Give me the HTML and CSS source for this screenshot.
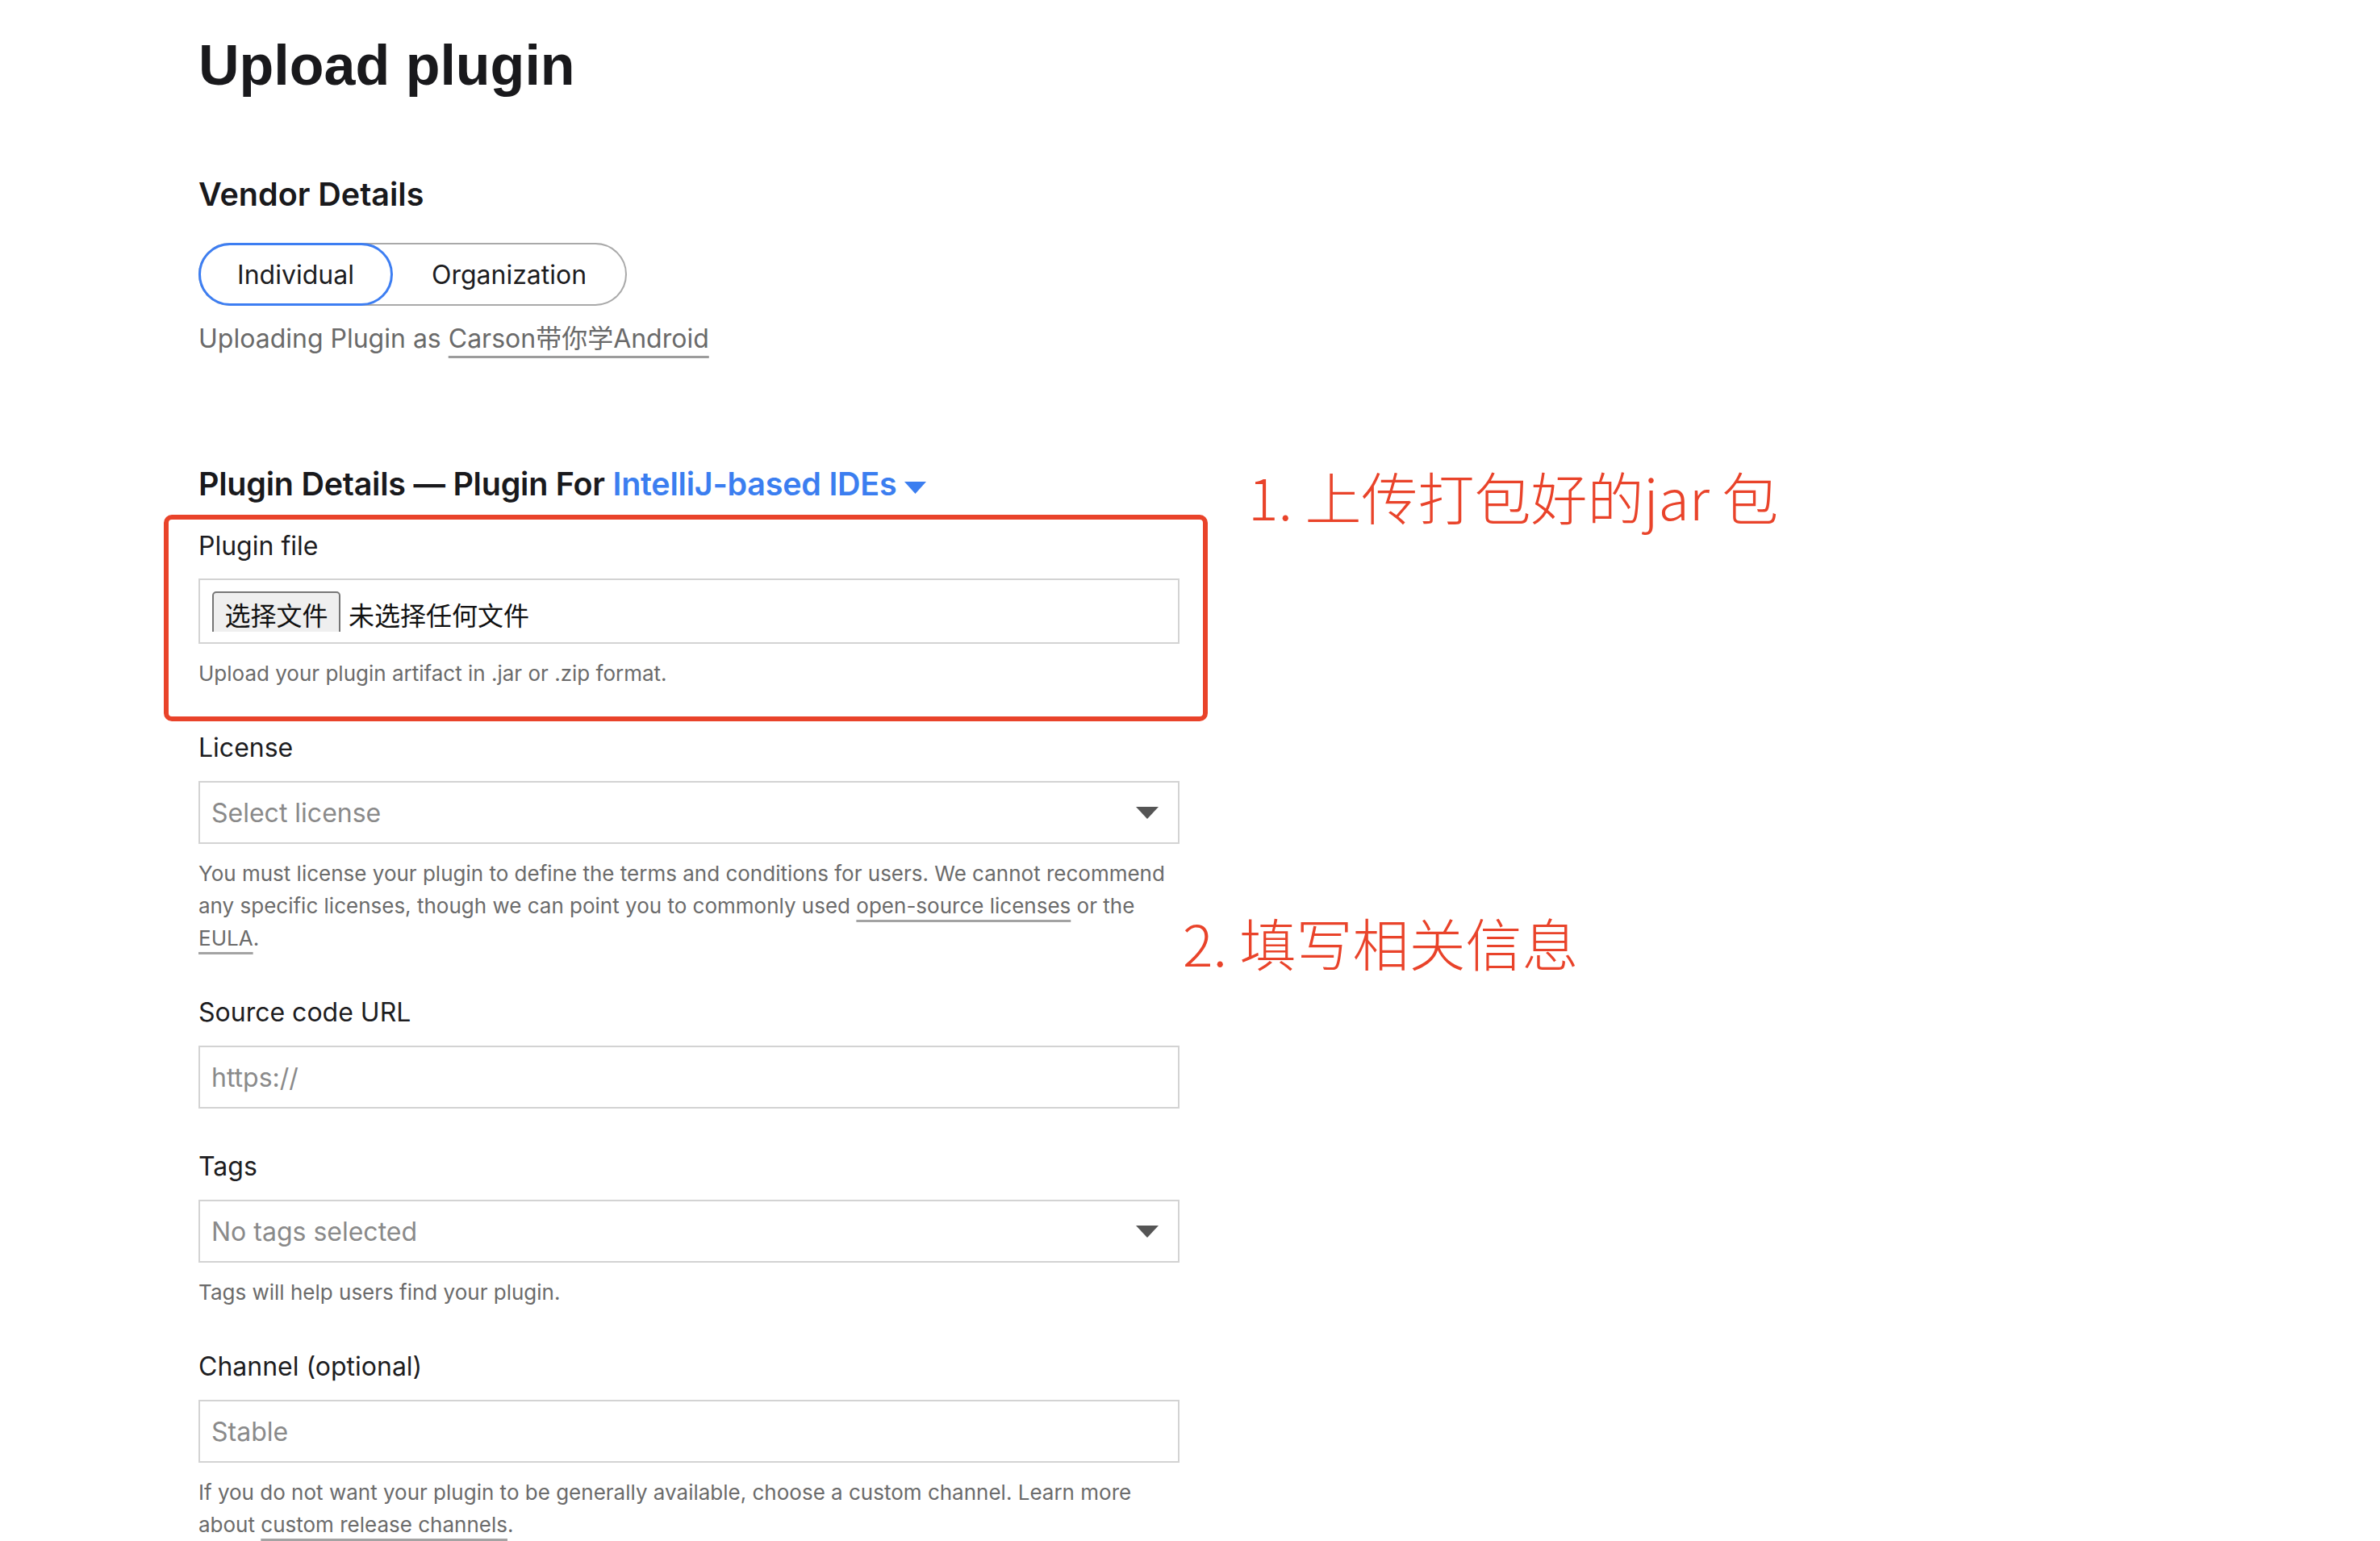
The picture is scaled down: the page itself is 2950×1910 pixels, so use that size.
FILE: index.html
```html
<!DOCTYPE html>
<html lang="en">
<head>
<meta charset="utf-8">
<title>Upload plugin</title>
<link rel="stylesheet" href="styles.css">
</head>
<body>
<main class="page">
  <h1 class="title">Upload plugin</h1>

  <section class="vendor">
    <h2 class="heading">Vendor Details</h2>
    <div class="toggle">
      <span class="opt opt-active">Individual</span>
      <span class="opt">Organization</span>
    </div>
    <p class="as">Uploading Plugin as <span class="as-name">Carson带你学Android</span></p>
  </section>

  <section class="details">
    <h2 class="heading heading-details">Plugin Details — Plugin For <span class="ide">IntelliJ-based IDEs<svg class="ide-caret" width="27" height="15" viewBox="0 0 27 15"><path d="M0 0H27L13.5 15Z" fill="currentColor"/></svg></span></h2>

    <div class="fields">
      <div class="field">
        <div class="label">Plugin file</div>
        <div class="file">
          <div class="file-inner">
            <span class="file-btn">选择文件</span>
            <span class="file-none">未选择任何文件</span>
          </div>
        </div>
        <p class="help">Upload your plugin artifact in .jar or .zip format.</p>
      </div>

      <div class="field">
        <div class="label">License</div>
        <div class="control select">
          <span class="ph">Select license</span>
          <svg class="caret" width="28" height="15" viewBox="0 0 28 15"><path d="M0 0H28L14 15Z" fill="#555"/></svg>
        </div>
        <p class="help">You must license your plugin to define the terms and conditions for users. We cannot recommend any specific licenses, though we can point you to commonly used <span class="link">open-source licenses</span> or the <span class="link">EULA</span>.</p>
      </div>

      <div class="field">
        <div class="label">Source code URL</div>
        <div class="control"><span class="ph">https://</span></div>
      </div>

      <div class="field">
        <div class="label">Tags</div>
        <div class="control select">
          <span class="ph">No tags selected</span>
          <svg class="caret" width="28" height="15" viewBox="0 0 28 15"><path d="M0 0H28L14 15Z" fill="#555"/></svg>
        </div>
        <p class="help">Tags will help users find your plugin.</p>
      </div>

      <div class="field">
        <div class="label">Channel (optional)</div>
        <div class="control"><span class="ph">Stable</span></div>
        <p class="help">If you do not want your plugin to be generally available, choose a custom channel. Learn more about <span class="link">custom release channels</span>.</p>
      </div>
    </div>
  </section>

  <div class="mark-box"></div>
  <div class="note note-1">1. 上传打包好的jar 包</div>
  <div class="note note-2">2. 填写相关信息</div>
</main>
</body>
</html>
```

FILE: styles.css
```css
html, body {
  margin: 0;
  padding: 0;
  background: #ffffff;
}

body {
  font-family: "Inter", "Noto Sans CJK SC", sans-serif;
  color: #1d1d1f;
}

.page {
  position: relative;
  padding: 41px 0 0 246px;
  width: 1216px;
}

.title {
  margin: 0;
  font-family: "Liberation Sans", "Noto Sans CJK SC", sans-serif;
  font-weight: 700;
  font-size: 70px;
  line-height: 80px;
  color: #19191c;
}

.heading {
  margin: 0;
  font-size: 39.5px;
  font-weight: 600;
  line-height: 48px;
  color: #19191c;
}

.heading-details {
  letter-spacing: -0.25px;
}

.vendor {
  margin-top: 96px;
  display: flex;
  flex-direction: column;
  align-items: flex-start;
}

.toggle {
  margin-top: 36px;
  display: inline-flex;
  box-sizing: border-box;
  height: 78px;
  width: 531px;
  border: 2px solid #a9a9a9;
  border-radius: 39px;
}

.opt {
  display: flex;
  align-items: center;
  justify-content: center;
  font-size: 32px;
  color: #1d1d1f;
  flex: 1;
}

.opt-active {
  flex: 0 0 241px;
  box-sizing: border-box;
  height: 78px;
  margin: -2px 0 -2px -2px;
  border: 3px solid #3d7ef2;
  border-radius: 39px;
}

.as {
  margin: 21px 0 0;
  font-size: 32px;
  line-height: 40px;
  color: #6a6a6a;
}

.as-name {
  text-decoration: underline;
  text-decoration-color: #9c9c9c;
  text-decoration-thickness: 3px;
  text-underline-offset: 10px;
}

.details {
  margin-top: 136px;
}

.ide {
  color: #3b7ef0;
}

.ide-caret {
  margin-left: 10px;
  vertical-align: 2px;
}

.fields {
  margin-top: 33px;
  display: flex;
  flex-direction: column;
  gap: 52px;
}

.field {
  display: flex;
  flex-direction: column;
}

.label {
  font-size: 32px;
  line-height: 40px;
  color: #1d1d1f;
  margin-bottom: 21px;
}

.control {
  box-sizing: border-box;
  height: 78px;
  border: 2px solid #d3d3d3;
  display: flex;
  align-items: center;
  padding: 0 24px 0 14px;
}

.select {
  justify-content: space-between;
}

.ph {
  font-size: 32px;
  color: #8a8a8a;
}

.file {
  box-sizing: border-box;
  height: 81px;
  margin-top: -1px;
  border: 2px solid #d3d3d3;
  padding: 14px 0 0 15px;
}

.file-inner {
  height: 50px;
  overflow: hidden;
  display: flex;
  align-items: flex-start;
  gap: 10px;
  font-family: "Noto Sans CJK SC", sans-serif;
  font-size: 32px;
  color: #111;
}

.file-btn {
  box-sizing: border-box;
  height: 60px;
  width: 159px;
  border: 2px solid #767676;
  border-radius: 5px;
  background: #efefef;
  text-align: center;
  line-height: 52px;
}

.file-none {
  line-height: 56px;
}

.help {
  margin: 17px 0 0;
  font-size: 26px;
  line-height: 40px;
  color: #6b6b6b;
}

.link {
  text-decoration: underline;
  text-decoration-color: #a3a3a3;
  text-decoration-thickness: 3px;
  text-underline-offset: 8px;
}

.mark-box {
  position: absolute;
  left: 203px;
  top: 638px;
  width: 1294px;
  height: 256px;
  box-sizing: border-box;
  border: 6px solid #e9432a;
  border-radius: 10px;
}

.note {
  position: absolute;
  font-family: "Noto Sans CJK SC", sans-serif;
  font-weight: 300;
  font-size: 70px;
  line-height: 80px;
  color: #e9432a;
  white-space: nowrap;
}

.note-1 {
  left: 1547px;
  top: 575px;
}

.note-2 {
  left: 1466px;
  top: 1128px;
}
```
